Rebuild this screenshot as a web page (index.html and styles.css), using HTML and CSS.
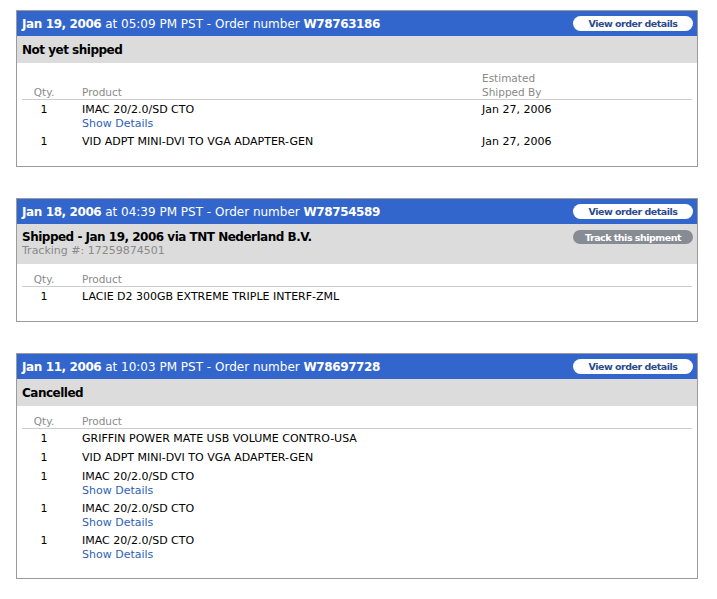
FILE: index.html
```html
<!DOCTYPE html>
<html>
<head>
<meta charset="utf-8">
<link rel="stylesheet" href="styles.css">
</head>
<body>
<div class="orders">

  <section class="order">
    <header class="order-head">
      <h2 class="order-title"><b>Jan 19, 2006</b> at 05:09 PM PST - Order number <b>W78763186</b></h2>
      <a class="pill pill-white">View order details</a>
    </header>
    <div class="status">
      <div class="status-text">
        <div class="status-title">Not yet shipped</div>
      </div>
    </div>
    <table class="items">
      <thead>
        <tr><th class="qty">Qty.</th><th class="prod">Product</th><th class="est">Estimated<br>Shipped By</th></tr>
      </thead>
      <tbody>
        <tr><td class="qty">1</td><td class="prod">IMAC 20/2.0/SD CTO<a class="details">Show Details</a></td><td class="est">Jan 27, 2006</td></tr>
        <tr><td class="qty">1</td><td class="prod">VID ADPT MINI-DVI TO VGA ADAPTER-GEN</td><td class="est">Jan 27, 2006</td></tr>
      </tbody>
    </table>
  </section>

  <section class="order">
    <header class="order-head">
      <h2 class="order-title"><b>Jan 18, 2006</b> at 04:39 PM PST - Order number <b>W78754589</b></h2>
      <a class="pill pill-white">View order details</a>
    </header>
    <div class="status status-tall">
      <div class="status-text">
        <div class="status-title">Shipped - Jan 19, 2006 via TNT Nederland B.V.</div>
        <div class="tracking">Tracking #: 17259874501</div>
      </div>
      <a class="pill pill-grey">Track this shipment</a>
    </div>
    <table class="items">
      <thead>
        <tr><th class="qty">Qty.</th><th class="prod">Product</th><th class="est"></th></tr>
      </thead>
      <tbody>
        <tr><td class="qty">1</td><td class="prod">LACIE D2 300GB EXTREME TRIPLE INTERF-ZML</td><td class="est"></td></tr>
      </tbody>
    </table>
  </section>

  <section class="order">
    <header class="order-head">
      <h2 class="order-title"><b>Jan 11, 2006</b> at 10:03 PM PST - Order number <b>W78697728</b></h2>
      <a class="pill pill-white">View order details</a>
    </header>
    <div class="status">
      <div class="status-text">
        <div class="status-title">Cancelled</div>
      </div>
    </div>
    <table class="items">
      <thead>
        <tr><th class="qty">Qty.</th><th class="prod">Product</th><th class="est"></th></tr>
      </thead>
      <tbody>
        <tr><td class="qty">1</td><td class="prod">GRIFFIN POWER MATE USB VOLUME CONTRO-USA</td><td class="est"></td></tr>
        <tr><td class="qty">1</td><td class="prod">VID ADPT MINI-DVI TO VGA ADAPTER-GEN</td><td class="est"></td></tr>
        <tr><td class="qty">1</td><td class="prod">IMAC 20/2.0/SD CTO<a class="details">Show Details</a></td><td class="est"></td></tr>
        <tr><td class="qty">1</td><td class="prod">IMAC 20/2.0/SD CTO<a class="details">Show Details</a></td><td class="est"></td></tr>
        <tr><td class="qty">1</td><td class="prod">IMAC 20/2.0/SD CTO<a class="details">Show Details</a></td><td class="est"></td></tr>
      </tbody>
    </table>
  </section>

</div>
</body>
</html>
```

FILE: styles.css
```css
html, body {
  margin: 0;
  padding: 0;
  background: #ffffff;
}

body {
  font-family: "DejaVu Sans", "Liberation Sans", sans-serif;
  color: #000;
}

.orders {
  display: flex;
  flex-direction: column;
  gap: 31px;
  padding: 10px 0 0 16px;
}

.order {
  width: 680px;
  border: 1px solid #9b9b9b;
  background: #fff;
  padding-bottom: 15px;
}

.order-head {
  height: 25px;
  background: #3366cc;
  display: flex;
  align-items: center;
  justify-content: space-between;
  padding: 0 4px 0 5px;
}

.order-title {
  margin: 0;
  font-size: 12px;
  font-weight: normal;
  color: #fff;
}

.order-title b {
  font-weight: bold;
  letter-spacing: -0.4px;
}

.pill {
  display: flex;
  align-items: center;
  justify-content: center;
  width: 120px;
  height: 15px;
  border-radius: 8px;
  font-size: 9.5px;
  font-weight: bold;
  letter-spacing: -0.5px;
  text-decoration: none;
}

.pill-white {
  background: #fff;
  color: #2c4a8c;
}

.pill-grey {
  background: #878c94;
  color: #fff;
  height: 14px;
}

.status {
  background: #dcdcdc;
  height: 27px;
  display: flex;
  align-items: center;
  justify-content: space-between;
  padding: 0 4px 0 5px;
}

.status-tall {
  height: 40px;
  align-items: flex-start;
  padding-top: 6px;
  box-sizing: border-box;
}

.status-title {
  font-size: 12px;
  font-weight: bold;
  letter-spacing: -0.5px;
  line-height: 14px;
}

.tracking {
  font-size: 11px;
  color: #8a8a8a;
  line-height: 14px;
}

.items {
  border-collapse: collapse;
  margin: 8px 5px 0 5px;
  width: 670px;
  font-size: 11px;
}

.items th {
  font-weight: normal;
  font-size: 10.5px;
  color: #8a8a8a;
  text-align: left;
  line-height: 14px;
  padding: 0;
  vertical-align: bottom;
  border-bottom: 1px solid #cccccc;
}

.items td {
  line-height: 14px;
  padding: 3px 0 2px 0;
  vertical-align: top;
}

.items .qty {
  width: 44px;
  text-align: center;
}

.items .prod {
  padding-left: 16px;
}

.items .est {
  width: 210px;
}

.details {
  display: block;
  line-height: 13px;
  color: #2e5fb8;
  text-decoration: none;
}
```
